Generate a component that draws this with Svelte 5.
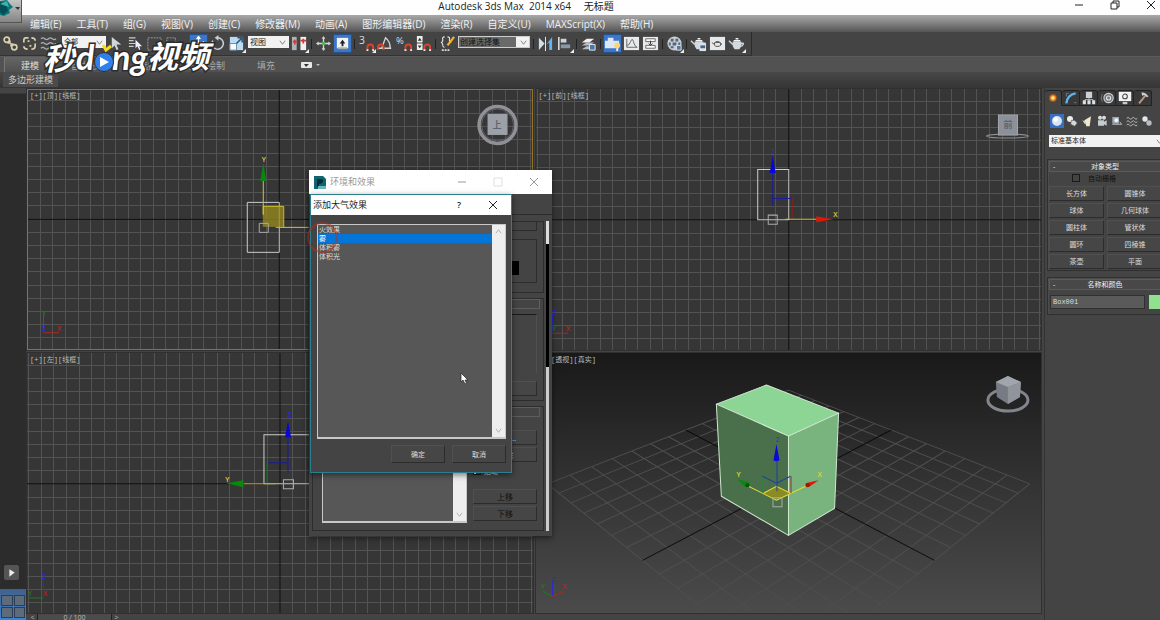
<script lang="ts">
	type Tool = { kind: 'tool'; name: string; label: string; on?: boolean; flyout?: boolean };
	type Item = Tool | { kind: 'sep' | 'gap' } | { kind: 'select'; cls: string; label: string; value: string };
	type Point = [number, number];

	let menus = [
		'编辑(E)', '工具(T)', '组(G)', '视图(V)', '创建(C)', '修改器(M)', '动画(A)',
		'图形编辑器(D)', '渲染(R)', '自定义(U)', 'MAXScript(X)', '帮助(H)'
	];

	let ribbonTabs = ['建模', '自由形式', '选择', '对象绘制', '填充'];
	let ribbonTab = $state('建模');

	const magnet = '<path d="M10 16v-3a3 3 0 0 1 6 0v3" fill="none" stroke="#d8452f" stroke-width="2"/><path d="M9 15h2v2H9zM15 15h2v2h-2z" fill="#eee"/>';
	const teapot = '<path d="M5 7h9q1 5-2 8H7Q4 12 5 7z" fill="#d3d9df"/><path d="M5 10L1 6M13 9q4-1 3 1t-3 2" fill="none" stroke="#d3d9df" stroke-width="1.5"/><path d="M6 6h7M8 4h3" stroke="#f3f3f3" stroke-width="1.5"/>';

	const icons: Record<string, string> = {
		link: '<g fill="none" stroke="#d9cfae" stroke-width="1.8"><circle cx="5" cy="5" r="2.8"/><circle cx="13" cy="13" r="2.8"/><path d="M7 7l4 4M6 9l3-3M9 12l3-3"/></g>',
		unlink: '<g fill="none" stroke="#d9cfae" stroke-width="1.8"><path d="M8 3H5Q3 3 3 6v2M11 3q4 0 4 3M3 12q0 3 4 3M11 15q4 0 4-4V9"/><path d="M7 6l2 1M9 12l2-1"/></g>',
		bind: '<path d="M1 4q2-2 4 0t4 0 4 0 4 0M1 9q2-2 4 0t4 0 4 0 4 0M1 14q2-2 4 0t4 0 4 0" fill="none" stroke="#a9adb2" stroke-width="1.3"/>',
		pick: '<path d="M4 2v12l3-3 2 5 2-1-2-5h5z" fill="#cfd6de"/>',
		pickName: '<path d="M2 3h7M2 6h5M2 9h7M2 12h5" stroke="#ccc" stroke-width="1.3"/><path d="M9 5v9l2-2 2 4 1-1-1-3h3z" fill="#eef"/>',
		rect: '<path d="M2 3h14v13H2z" fill="none" stroke="#9b9b9b" stroke-dasharray="2 1"/>',
		crossing: '<path d="M2 3h9v11H2z" fill="none" stroke="#999" stroke-dasharray="2 1"/><circle cx="12" cy="11" r="4" fill="#888"/>',
		move: '<path d="M9 2v14M2 9h14M9 1l-2 3h4zM9 17l-2-3h4zM1 9l3-2v4zM17 9l-3-2v4z" fill="#fff" stroke="#fff"/>',
		rotate: '<path d="M9 3a6 6 0 1 1-5 3" fill="none" stroke="#c9ced4" stroke-width="1.6"/><path d="M10 0v6L6 3z" fill="#c9ced4"/>',
		scale: '<path d="M2 2h14v14H2z" fill="#b8dcf2"/><path d="M2 9h7v7H2z" fill="#f7fbff" stroke="#6c8aa0"/><path d="M9 9l5-5M10 3h5v5" fill="none" stroke="#2d5272" stroke-width="1.6"/>',
		pivot: '<path d="M1 2h5v14H1z" fill="#aab4bd"/><path d="M10 2h6v14h-6z" fill="#f0f0f0"/><path d="M4 5v5M2 7h5M13 4v5M10 6h6" stroke="#d43b2c" stroke-width="1.8"/>',
		manipulate: '<path d="M9 2v14M2 9h14" stroke="#ddd" stroke-width="1.4"/><circle cx="9" cy="9" r="2" fill="#5ab25f"/><path d="M7 4l2-3 2 3zM7 14l2 3 2-3zM4 7L1 9l3 2zM14 7l3 2-3 2z" fill="#cfcfcf"/>',
		keyboard: '<path d="M3 3h12v11H3z" fill="#f3f3f3"/><path d="M4 13h10v2H4z" fill="#aaa"/><path d="M9 5l3 4h-2v3H8V9H6z" fill="#222"/>',
		snap: '<text x="1" y="10" font-size="11" fill="#ddd">3</text>' + magnet,
		angleSnap: '<path d="M1 14h14M5 14L9 3q5 4 5 11" fill="none" stroke="#d5d5d5" stroke-width="1.4"/><path d="M1 16v-3a3 3 0 0 1 6 0v3" fill="none" stroke="#d8452f" stroke-width="2"/>',
		percentSnap: '<text x="0" y="10" font-size="10" fill="#ddd">%</text>' + magnet,
		spinnerSnap: '<path d="M2 1h6v7H2zM2 9h6v7H2z" fill="#eee"/><path d="M3 6l2-3 2 3zM3 11l2 3 2-3z" fill="#333"/>' + magnet,
		namedSets: '<path d="M6 2Q3 2 4 5q0 3-2 3 2 0 2 3 0 2 2 2M9 2q3 0 2 3 0 3 2 3" fill="none" stroke="#ddd" stroke-width="1.2"/><path d="M16 2l-7 9" stroke="#f3b12f" stroke-width="2.4"/><path d="M3 16h9" stroke="#ddd" stroke-width="2" stroke-dasharray="2 1"/>',
		mirror: '<path d="M2 3l6 6-6 7z" fill="#d6dde3"/><path d="M9 2v15" stroke="#eee"/><path d="M16 2v14h-3V8l-3 2z" fill="#65b4ec"/>',
		align: '<path d="M3 2v14" stroke="#eee" stroke-width="1.5"/><path d="M5 4h6v4H5z" fill="#cdd3d8"/><path d="M5 10h10v4H5z" fill="#8898a8"/>',
		layers: '<path d="M2 8l5-4h8l-5 4z" fill="#f0f0f0"/><path d="M2 11l5-3h8l-5 3zM2 15l5-3h8l-5 3z" fill="#b8bec4"/><path d="M10 10h6v6h-6z" fill="#4878a5" stroke="#e5edf4"/>',
		ribbon: '<path d="M1 6h3V3h6v3h6v8H1z" fill="#dbe7f3"/><circle cx="14" cy="11" r="3" fill="#ffd66a"/><path d="M13 14h2v3h-2z" fill="#f5f0dc"/>',
		curve: '<path d="M1 2h16v14H1z" fill="#e8eaec"/><path d="M4 4v9h11M4 11q3 0 4-4 2-5 3 0 1 5 4 6" fill="none" stroke="#666"/>',
		schematic: '<path d="M1 2h16v14H1z" fill="#e8eaec"/><path d="M4 4h10v3H4zM4 11h10v3H4z" fill="#fff" stroke="#666"/><path d="M9 6v4M7 9l2 2 2-2" stroke="#333" fill="none"/>',
		material: '<circle cx="9" cy="9" r="7.5" fill="#c8ced3"/><path d="M5 4h3v3H5zM10 4h3v3h-3zM7 8h4v3H7zM3 8h2v3H3zM13 8h2v3h-2zM5 12h3v2H5z" fill="#536679"/><path d="M11 11h5v5h-5z" fill="#5479a0" stroke="#dfe7ee"/>',
		renderSetup: teapot + '<path d="M10 9h7v8h-7z" fill="#dce3e9"/><path d="M11 11h5v3h-5z" fill="#40678e"/>',
		frame: '<path d="M1 2h16v14H1z" fill="#e6e9eb"/><path d="M6 8h6q1 3-1 4H7Q5 11 6 8zM6 10L3 8M12 9q3 0 0 2M7 7h4" fill="none" stroke="#555"/>',
		render: teapot,
		sun: '<circle cx="9" cy="9" r="5" fill="#a4571d"/><circle cx="9" cy="9" r="3.6" fill="#f79a2c"/><circle cx="9" cy="9" r="1.8" fill="#fff0a8"/>',
		arc: '<path d="M3 16Q4 5 15 3" fill="none" stroke="#60b3e9" stroke-width="3"/><path d="M3 3h3M3 3v4M13 15h3" stroke="#888"/>',
		hierarchy: '<path d="M5 1h8v8H5z" fill="#c9d0d6"/><path d="M9 8v3M4 13v-2h10v2" fill="none" stroke="#ccc"/><path d="M1 12h4v5H1zM7 12h4v5H7zM13 12h4v5h-4z" fill="#d9dfe4"/>',
		motion: '<circle cx="11" cy="9" r="6" fill="#777" stroke="#ccd1d6" stroke-width="1.4"/><circle cx="11" cy="9" r="2.6" fill="none" stroke="#dfe3e6" stroke-width="1.5"/><path d="M3 4q-3 5 0 10" fill="none" stroke="#888"/>',
		display: '<path d="M1 1h16v12H1z" fill="#f0f2f4"/><path d="M6 14h6v3H6z" fill="#c8c8c8"/><circle cx="9" cy="7" r="3" fill="none" stroke="#444" stroke-width="1.3"/>',
		hammer: '<path d="M12 6L4 16" stroke="#bd9683" stroke-width="2.4"/><path d="M7 2q5-1 9 5l-2 1-3-3-3 1z" fill="#ccd0d4"/>',
		sphere: '<circle cx="9" cy="9" r="7.5" fill="#d7e4f2"/><circle cx="7" cy="7" r="3.5" fill="#fff"/>',
		shapes: '<circle cx="6" cy="6" r="4.500" fill="#eee"/><path d="M8 8h5l4 4-4 5-6-3z" fill="#d5d8db" stroke="#555"/>',
		light: '<path d="M15 2L5 8l3 9h5z" fill="#eee8c9"/><path d="M2 8l5 2-1 4z" fill="#ddd"/>',
		camera: '<circle cx="6" cy="4" r="3" fill="#ddd"/><circle cx="12" cy="4" r="3" fill="#ddd"/><path d="M3 8h9v8H3zM12 10l4-2v8l-4-2z" fill="#c5cbd0"/>',
		helper: '<path d="M2 3h10v10H2z" fill="#9eabb7"/><circle cx="8" cy="8" r="3" fill="#f1f3f5"/><path d="M2 14h14l-3-4" stroke="#eee" fill="none"/>',
		warp: '<path d="M1 5q2-3 4 0t4 0 4 0 4 0M1 10q2-3 4 0t4 0 4 0 4 0M1 15q2-3 4 0t4 0 4 0 4 0" fill="none" stroke="#c3c7ca" stroke-width="1.3"/>',
		system: '<circle cx="6" cy="6" r="4" fill="#e3e6e8"/><circle cx="12" cy="12" r="4" fill="#b7bdc2"/>'
	};

	const tool = (name: string, label: string, on = false, flyout = false): Tool => ({ kind: 'tool', name, label, on, flyout });
	const sep: Item = { kind: 'sep' };

	let toolbar: Item[] = [
		tool('link', '选择并链接'),
		tool('unlink', '断开链接'),
		tool('bind', '绑定到空间扭曲'),
		{ kind: 'select', cls: 'filter', label: '选择过滤器', value: '全部' },
		tool('pick', '选择对象'),
		tool('pickName', '按名称选择'),
		tool('rect', '矩形选择区域'),
		tool('crossing', '窗口/交叉'),
		{ kind: 'gap' },
		tool('move', '选择并移动', true),
		tool('rotate', '选择并旋转'),
		tool('scale', '选择并缩放', false, true),
		{ kind: 'select', cls: 'coords', label: '参考坐标系', value: '视图' },
		tool('pivot', '使用轴点中心', false, true),
		sep,
		tool('manipulate', '选择并操纵'),
		tool('keyboard', '键盘快捷键覆盖', true),
		sep,
		tool('snap', '捕捉开关', false, true),
		tool('angleSnap', '角度捕捉'),
		tool('percentSnap', '百分比捕捉'),
		tool('spinnerSnap', '微调器捕捉'),
		sep,
		tool('namedSets', '编辑命名选择集'),
		{ kind: 'select', cls: 'sets', label: '命名选择集', value: '创建选择集' },
		sep,
		tool('mirror', '镜像'),
		tool('align', '对齐', false, true),
		sep,
		tool('layers', '层管理器'),
		sep,
		tool('ribbon', '切换功能区', true),
		tool('curve', '曲线编辑器'),
		tool('schematic', '图解视图'),
		sep,
		tool('material', '材质编辑器', false, true),
		sep,
		tool('renderSetup', '渲染设置'),
		tool('frame', '渲染帧窗口'),
		tool('render', '渲染产品', false, true)
	];

	let panelTabs = [
		['sun', '创建'], ['arc', '修改'], ['hierarchy', '层次'],
		['motion', '运动'], ['display', '显示'], ['hammer', '实用程序']
	];
	let categories = [
		['sphere', '几何体'], ['shapes', '图形'], ['light', '灯光'], ['camera', '摄影机'],
		['helper', '辅助对象'], ['warp', '空间扭曲'], ['system', '系统']
	];
	let primitives = ['长方体', '圆锥体', '球体', '几何球体', '圆柱体', '管状体', '圆环', '四棱锥', '茶壶', '平面'];

	let effects = ['火效果', '雾', '体积雾', '体积光'];
	let effect = $state('雾');
	let autoGrid = $state(false);
	let active = $state(true);
	let objectName = $state('Box001');

	// Home grid of an orthographic view, stepped outwards from its origin.
	function homeGrid(x: number, y: number, w: number, h: number, cx: number, cy: number) {
		let d = '';
		for (let i = -60; i <= 60; i++) {
			const gx = Math.round(cx + i * 12.56);
			const gy = Math.round(cy + i * 13.2);
			if (i && gx > x && gx < x + w) d += `M${gx} ${y}v${h}`;
			if (i && gy > y && gy < y + h) d += `M${x} ${gy}h${w}`;
		}
		return d;
	}

	// Ground plane seen along its diagonal; u and v run from -1 to 1.
	function project(u: number, v: number): Point {
		const depth = 5.75 + u + v;
		return [788 + ((u - v) * 692) / depth, 121 + 2085 / depth];
	}
	function ground(u1: number, v1: number, u2: number, v2: number) {
		return `M${project(u1, v1).join(' ')}L${project(u2, v2).join(' ')}`;
	}
	let floor = '';
	for (let i = -7; i <= 7; i++) {
		if (i) floor += ground(i / 7, -1, i / 7, 1) + ground(-1, i / 7, 1, i / 7);
	}
	const axes = ground(0, -1, 0, 1) + ground(-1, 0, 1, 0);
</script>

{#snippet icon(name: string)}
	<svg class="icon" viewBox="0 0 18 18" aria-hidden="true">{@html icons[name]}</svg>
{/snippet}

{#snippet chevron(up = false)}
	<svg class="chevron" viewBox="0 0 8 8" aria-hidden="true">
		<path d={up ? 'M1 6l3-4 3 4' : 'M1 2l3 4 3-4'} fill="none" stroke="currentColor" />
	</svg>
{/snippet}

<div class="app">
	<header class="titlebar">
		<button class="logo" aria-label="应用程序">
			<svg viewBox="0 0 21 22">
				<path d="M0 1l7-1 3 4 3 3-4 3 1 3-6 3-4-1z" fill="#0c777a" />
				<path d="M0 2l6 2 2 7-5 4-3-3z" fill="#064d55" />
				<path d="M0 4l7-3 2 6z" fill="#39b3ac" />
				<path d="M15 7h5l-2 3z" fill="#333" />
			</svg>
		</button>
		<h1>Autodesk 3ds Max&nbsp; 2014 x64 <span>无标题</span></h1>
		<div class="window-buttons">
			<button aria-label="最小化"><svg viewBox="0 0 10 10"><path d="M1 5h8" /></svg></button>
			<button aria-label="还原"><svg viewBox="0 0 10 10"><path d="M1 3h6v6H1zM3 3V1h6v6H7" /></svg></button>
			<button aria-label="关闭"><svg viewBox="0 0 10 10"><path d="M1 1l8 8M9 1L1 9" /></svg></button>
		</div>
	</header>

	<nav class="menubar">
		{#each menus as menu}
			<button>{menu}</button>
		{/each}
	</nav>

	<div class="toolbar">
		<div class="tools">
			{#each toolbar as item}
				{#if item.kind === 'tool'}
					<button class="tool" class:on={item.on} class:flyout={item.flyout} aria-label={item.label}>
						{@render icon(item.name)}
					</button>
				{:else if item.kind === 'select'}
					<span class="drop {item.cls}">
						<select aria-label={item.label}><option>{item.value}</option></select>
						{@render chevron()}
					</span>
				{:else}
					<span class={item.kind}></span>
				{/if}
			{/each}
		</div>
	</div>

	<div class="ribbon">
		{#each ribbonTabs as tab}
			<button class:current={ribbonTab === tab} onclick={() => (ribbonTab = tab)}>{tab}</button>
		{/each}
		<button class="toggle" aria-label="最小化功能区">
			<svg viewBox="0 0 20 8">
				<rect x="0" y="1" width="11" height="6" rx="1" fill="#e8e8e8" />
				<path d="M3 3h5L5 6z" fill="#333" />
				<path d="M15 3h4l-2 2z" fill="#bbb" />
			</svg>
		</button>
	</div>
	<div class="subribbon"><button>多边形建模</button></div>

	<div class="main">
		<aside class="rail">
			<button class="play" aria-label="展开"><svg viewBox="0 0 14 14"><path d="M5 4l5 3-5 4z" fill="#eee" /></svg></button>
			<button class="layout" aria-label="视口布局"><i></i><i></i><i></i><i></i></button>
		</aside>

		<div class="centre">
			<div class="viewports">
				<section class="viewport selected">
					<span class="label">[+][顶][线框]</span>
					<svg viewBox="27 89 506 261" preserveAspectRatio="xMinYMin slice">
						<path class="grid" d={homeGrid(27, 89, 506, 261, 279.5, 219.5)} />
						<path class="origin" d="M279.500 89v261M27 219.500h506" />
						<path class="wire" d="M247.500 202.500h32v50h-32z" />
						<rect x="263" y="206" width="21" height="21" fill="#9b8e1c" fill-opacity=".75" />
						<path d="M263.500 214V206.500h20.500V227.500" fill="none" stroke="#c8b92c" />
						<path d="M263.500 180v35M276 227.500h60" stroke="#d5c531" />
						<path d="M263.500 163l3 18h-6z" fill="#078a0c" />
						<path class="pivot" d="M259.500 223.500h9v9h-9z" />
						<text x="262" y="162" fill="#e0cf35">Y</text>
						<path d="M43.500 332v-18" stroke="#1b7a21" /><path d="M43.500 333h16" stroke="#ad281e" />
						<text x="42" y="316" fill="#1b7a21">Y</text><text x="42" y="331" fill="#2c2ccc">Z</text><text x="57" y="331" fill="#ad281e">X</text>
						<circle cx="498" cy="125" r="18.500" fill="none" stroke="#8f9196" stroke-width="3.500" />
						<circle cx="498" cy="125" r="16" fill="none" stroke="#5f6165" />
						<rect x="488" y="114" width="20" height="21" fill="#9ca1a9" />
						<text class="face" x="493" y="128">上</text>
					</svg>
				</section>

				<section class="viewport">
					<span class="label">[+][前][线框]</span>
					<svg viewBox="536 89 505 261" preserveAspectRatio="xMinYMin slice">
						<path class="grid" d={homeGrid(536, 89, 505, 261, 788, 219.5)} />
						<path class="origin" d="M788.500 89v261M536 219.500h505" />
						<path class="wire" d="M757.500 169.500h31v50h-31z" />
						<path d="M772.500 172v34M772.500 198.500h19" stroke="#1b1b9b" />
						<path d="M792 198v20" stroke="#8c2119" />
						<path d="M785 219h32" stroke="#d5c531" />
						<path d="M772.500 156l3 17h-6z" fill="#0606d8" />
						<path d="M833 219l-17-3v6z" fill="#dc1908" />
						<path class="pivot" d="M768 215h9v9h-9z" />
						<text x="771" y="154" fill="#2c2ccc">Z</text><text x="833" y="217" fill="#e0cf35">X</text>
						<path d="M552 333h16" stroke="#ad281e" /><path d="M552.500 332v-18" stroke="#2c2ccc" />
						<text x="552" y="315" fill="#2c2ccc">Z</text><text x="552" y="331" fill="#1b7a21">Y</text><text x="566" y="331" fill="#ad281e">X</text>
						<ellipse cx="1007" cy="136" rx="21" ry="2" fill="none" stroke="#8f9196" />
						<rect x="998" y="115" width="19" height="20" fill="#8b9099" stroke="#a1a6ae" />
						<text class="face" x="1003" y="128">前</text>
					</svg>
				</section>

				<section class="viewport">
					<span class="label">[+][左][线框]</span>
					<svg viewBox="27 353 506 260" preserveAspectRatio="xMinYMin slice">
						<path class="grid" d={homeGrid(27, 353, 506, 260, 279.5, 483.5)} />
						<path class="origin" d="M279.500 353v260M27 483.500h506" />
						<path class="wire" d="M263.500 483.500v-49h50v49z" />
						<path d="M287.500 436v35M268 462.500h19" stroke="#1b1b9b" />
						<path d="M266.500 462v21" stroke="#176b1c" />
						<path d="M243 483.500h32" stroke="#c3a52b" />
						<path d="M287.500 421l3 16h-6z" fill="#0606d8" />
						<path d="M226 483l17-3v7z" fill="#078a0c" />
						<path class="pivot" d="M283 479.500h10v9h-10z" />
						<text x="287" y="417" fill="#2c2ccc">Z</text><text x="225" y="482" fill="#e0cf35">Y</text>
						<path d="M43.500 597v-19" stroke="#2c2ccc" /><path d="M29 597.500h14" stroke="#1b7a21" />
						<text x="42" y="579" fill="#2c2ccc">Z</text><text x="28" y="596" fill="#1b7a21">Y</text><text x="43" y="596" fill="#ad281e">X</text>
					</svg>
				</section>

				<section class="viewport perspective">
					<span class="label">[+][透视][真实]</span>
					<svg viewBox="536 353 505 260" preserveAspectRatio="xMinYMin slice">
						<path d={floor} fill="none" stroke="#4e4e4e" />
						<path d={axes} fill="none" stroke="#0d0d0d" />
						<g stroke="#cfe8cf" stroke-linejoin="round">
							<path d="M766 385l-50 19 72 32 50-23z" fill="#8dd594" />
							<path d="M716 404l5 92 67 39v-99z" fill="#4a704b" />
							<path d="M788 436l50-23-4 95-46 27z" fill="#79b37e" />
						</g>
						<path d="M776.500 486l14 7-14 7-14-7z" fill="#8b8b26" />
						<path d="M748 486l28 14M805 486l-29 14M763 493l13-7 14 7" fill="none" stroke="#e0d93a" />
						<path d="M762.500 476v17" stroke="#268b36" /><path d="M790.500 476v17" stroke="#97322a" />
						<path d="M776.500 461v30M762 476l14 7 14-7" fill="none" stroke="#20419b" />
						<path d="M776 444l3 16q-3 2-6 0z" fill="#0808db" />
						<path d="M737 479l12 3-4 5z" fill="#068a0c" /><circle cx="747" cy="485" r="2" fill="#074f0a" />
						<path d="M818 480l-13 3 3 4z" fill="#df1605" /><circle cx="807" cy="485" r="2" fill="#9a150a" />
						<path class="pivot" d="M772.500 497.500h9v9h-9z" />
						<text x="775" y="442" fill="#2347c2">Z</text><text x="736" y="477" fill="#d8d83b">Y</text><text x="817" y="477" fill="#d8d83b">X</text>
						<path d="M552.500 596v-15" stroke="#2c2ccc" /><path d="M552 596l-9-5" stroke="#1b7a21" /><path d="M552 596l11-5" stroke="#ad281e" />
						<text x="551" y="582" fill="#2c2ccc">Z</text><text x="541" y="589" fill="#1b7a21">Y</text><text x="562" y="589" fill="#ad281e">X</text>
						<ellipse cx="1007" cy="400" rx="20" ry="11" fill="none" stroke="#82858c" stroke-width="3" />
						<path d="M1007 376l13 6-1 15-12 7-11-7-1-15z" fill="#777b83" />
						<path d="M1007 376l13 6-13 5-12-5z" fill="#a1a5ac" />
						<path d="M1007 387l13-5-1 15-12 7z" fill="#90949c" />
					</svg>
				</section>
			</div>

			<div class="timeline">
				<button aria-label="上一帧">&lt;</button>
				<span class="frame">0 / 100</span>
				<button aria-label="下一帧">&gt;</button>
			</div>
		</div>

		<aside class="panel">
			<div class="panel-tabs">
				{#each panelTabs as [name, label], i}
					<button class:current={i === 0} aria-label={label}>{@render icon(name)}</button>
				{/each}
			</div>
			<div class="categories">
				{#each categories as [name, label], i}
					<button class:current={i === 0} aria-label={label}>{@render icon(name)}</button>
				{/each}
			</div>
			<span class="drop subtype">
				<select aria-label="类别"><option>标准基本体</option></select>
				{@render chevron()}
			</span>

			<section class="rollout first">
				<h2><span>-</span>对象类型</h2>
				<label class="check"><input type="checkbox" bind:checked={autoGrid} />自动栅格</label>
				<div class="primitives">
					{#each primitives as name}
						<button class="btn">{name}</button>
					{/each}
				</div>
			</section>
			<section class="rollout">
				<h2><span>-</span>名称和颜色</h2>
				<div class="name">
					<input aria-label="名称" bind:value={objectName} />
					<button aria-label="颜色"></button>
				</div>
			</section>
		</aside>
	</div>

	<div class="window environment">
		<header>
			<svg class="badge" viewBox="0 0 12 13"><path d="M0 0h9l3 3v10H0z" fill="#10656f" /><path d="M3 3h3q4 0 3 3-1 2-4 2v3H3z" fill="#042f38" /><path d="M4 10h8v3H4z" fill="#66b8be" /></svg>
			<h2>环境和效果</h2>
			<button aria-label="最小化"><svg viewBox="0 0 10 10"><path d="M1 5h8" /></svg></button>
			<button class="faint" aria-label="最大化"><svg viewBox="0 0 10 10"><path d="M1 1h8v8H1z" /></svg></button>
			<button aria-label="关闭"><svg viewBox="0 0 10 10"><path d="M1 1l8 8M9 1L1 9" /></svg></button>
		</header>
		<div class="env-body">
			<div class="env-pages">
				<section class="common">
					<div class="strip"></div>
					<div class="swatches"><i></i></div>
				</section>
				<section class="exposure">
					<div class="bar"></div>
					<div class="well"></div>
					<button class="btn" aria-label="渲染预览"></button>
				</section>
				<section class="atmosphere">
					<div class="bar"></div>
					<div class="columns">
						<div class="listbox">
							<div class="scroll">{@render chevron()}</div>
						</div>
						<div class="actions">
							<button class="btn">添加...</button>
							<button class="btn">删除</button>
							<label class="check"><input type="checkbox" bind:checked={active} />活动</label>
							<button class="btn dim">上移</button>
							<button class="btn dim">下移</button>
						</div>
					</div>
				</section>
			</div>
			<div class="env-scroll"><i></i></div>
		</div>
	</div>

	<div class="window dialog" role="dialog" aria-label="添加大气效果">
		<header>
			<h2>添加大气效果</h2>
			<button class="help" aria-label="帮助">?</button>
			<button aria-label="关闭"><svg viewBox="0 0 10 10"><path d="M1 1l8 8M9 1L1 9" /></svg></button>
		</header>
		<div class="dialog-body">
			<div class="listbox">
				<div class="options" role="listbox" aria-label="大气效果">
					{#each effects as name}
						<button role="option" aria-selected={effect === name} onclick={() => (effect = name)}>{name}</button>
					{/each}
				</div>
				<div class="scroll">{@render chevron(true)}{@render chevron()}</div>
			</div>
			<footer>
				<button class="btn">确定</button>
				<button class="btn">取消</button>
			</footer>
		</div>
	</div>

	<div class="ring"></div>
	<svg class="cursor" viewBox="0 0 9 13"><path d="M1 1v9l2-2 2 4 1.500-1-1.500-3h3z" fill="#fff" stroke="#222" stroke-width=".7" /></svg>

	<svg class="watermark" viewBox="0 0 180 44">
		<g class="mark">
			<text x="4" y="30" font-size="31">秒</text>
			<text x="37" y="30" font-size="34">d</text>
			<text x="73" y="30" font-size="34">ng</text>
			<text x="108" y="28" font-size="31">视频</text>
		</g>
		<circle cx="65" cy="22" r="9.500" fill="#2f80ed" stroke="#303030" />
		<path d="M61 17l9 5-9 5z" fill="#fff" />
		<path d="M64 5l3 5 5-4" fill="none" stroke="#fadb1e" stroke-width="3" />
	</svg>
</div>

<style>
	:global(body) {
		margin: 0;
		background: #444;
	}
	.app {
		position: relative;
		display: flex;
		flex-direction: column;
		height: 100vh;
		overflow: hidden;
		background: #444;
		color: #ddd;
		font: 7px/9px 'Open Sans', 'Noto Sans CJK SC', sans-serif;
	}
	button,
	input,
	select {
		margin: 0;
		padding: 0;
		border: 0;
		background: none;
		color: inherit;
		font: inherit;
	}
	h1,
	h2 {
		margin: 0;
		font: inherit;
	}
	svg {
		display: block;
	}

	/* title and menu */
	.titlebar {
		display: flex;
		justify-content: flex-end;
		flex: none;
		height: 15px;
		background: #fefefe;
		color: #222;
	}
	.titlebar h1 {
		position: absolute;
		left: 0;
		right: 0;
		padding-right: 108px;
		font-size: 10px;
		line-height: 12px;
		text-align: center;
	}
	.titlebar h1 span {
		margin-left: 10px;
	}
	.logo {
		position: absolute;
		z-index: 1;
		top: 0;
		left: 0;
		width: 22px;
		height: 23px;
		border: solid #555;
		border-width: 0 1px 1px 0;
		background: linear-gradient(#c4c4c4, #858585);
	}
	.window-buttons {
		position: relative;
		display: flex;
		gap: 26px;
		height: 10px;
		padding: 0 4px;
	}
	.window-buttons svg,
	.window header button svg {
		width: 10px;
		height: 10px;
		fill: none;
		stroke: currentColor;
	}
	.menubar {
		display: flex;
		flex: none;
		gap: 15px;
		height: 17px;
		padding-left: 30px;
		background: linear-gradient(#a9a9a9, #555);
		color: #f0f0f0;
		font-size: 10px;
		line-height: 18px;
	}
	.menubar button {
		white-space: nowrap;
	}

	/* toolbar */
	.toolbar {
		display: flex;
		flex: none;
		height: 24px;
		background: #444;
		border-bottom: 1px solid #5b5b5b;
	}
	.tools {
		display: flex;
		align-items: center;
		padding: 0 5px 0 1px;
		border-right: 1px solid #2b2b2b;
		border-bottom: 1px solid #333;
	}
	.tool {
		position: relative;
		width: 19px;
		height: 19px;
	}
	.icon {
		width: 17px;
		height: 17px;
		margin: auto;
	}
	.tool.on {
		background: #3b76c8;
		box-shadow: inset 0 0 0 1px #24508e;
	}
	.flyout::after {
		content: '';
		position: absolute;
		right: 0;
		bottom: 0;
		border: 2px solid;
		border-color: transparent #eee #eee transparent;
	}
	.sep {
		width: 1px;
		height: 10px;
		margin: 0 2px;
		background: #222;
	}
	.gap {
		width: 6px;
	}
	.drop {
		position: relative;
		align-self: flex-start;
		height: 12px;
		margin-top: 4px;
		background: #f2f2f2;
		color: #222;
	}
	.drop select {
		display: block;
		width: 100%;
		height: 12px;
		padding-left: 2px;
		appearance: none;
		line-height: 12px;
	}
	.chevron {
		width: 7px;
		height: 7px;
		color: #777;
	}
	.drop .chevron {
		position: absolute;
		top: 3px;
		right: 3px;
		pointer-events: none;
	}
	.filter {
		width: 44px;
		margin-left: 4px;
		margin-right: 1px;
	}
	.coords {
		width: 41px;
		margin-left: 2px;
		margin-right: 1px;
	}
	.sets {
		width: 72px;
		margin-left: 1px;
		margin-right: 1px;
		background: linear-gradient(to right, #6a6a6a 58px, #f2f2f2 58px);
		box-shadow: inset 0 0 0 1px #ccc;
		color: #111;
	}
	.drop.coords,
	.drop.sets {
		font-size: 8px;
	}

	/* ribbon */
	.ribbon {
		display: flex;
		flex: none;
		height: 15px;
		padding-left: 5px;
		background: #525252;
		color: #aaa;
		font-size: 9px;
		line-height: 17px;
	}
	.ribbon button {
		padding: 0 16px;
	}
	.ribbon .current {
		border-left: 1px solid #777;
		margin-left: -1px;
		background: linear-gradient(#666, #505050);
		color: #ddd;
	}
	.ribbon .toggle {
		padding: 0 10px;
	}
	.toggle svg {
		width: 20px;
		height: 8px;
	}
	.subribbon {
		flex: none;
		height: 16px;
		padding-left: 3px;
		background: linear-gradient(#484848, #353535);
		color: #ccc;
		font-size: 9px;
		line-height: 15px;
	}
	.subribbon button {
		padding: 0 5px;
		background: #4b4b4b;
	}

	/* work area */
	.main {
		display: flex;
		flex: 1;
		min-height: 0;
	}
	.rail {
		display: flex;
		flex-direction: column;
		align-items: center;
		justify-content: flex-end;
		gap: 9px;
		width: 26px;
		background: linear-gradient(#444 5px, #2c2c2c 6px);
	}
	.play {
		width: 15px;
		height: 15px;
		margin-right: 4px;
		border-radius: 2px;
		background: #555;
	}
	.layout {
		display: grid;
		grid-template-columns: 1fr 1fr;
		grid-template-rows: 1fr 1fr;
		gap: 1px;
		width: 26px;
		height: 31px;
		padding: 6px 1px 2px;
		box-sizing: border-box;
		background: linear-gradient(#41618b, #3d83d6);
	}
	.layout i {
		border: 1px solid #2c3d55;
		background: #5e6b7b;
	}
	.centre {
		display: flex;
		flex: 1;
		flex-direction: column;
		min-width: 0;
		padding: 1px 4px 0 1px;
	}
	.viewports {
		display: grid;
		flex: 1;
		grid-template-columns: 1fr 1fr;
		grid-template-rows: 1fr 1fr;
		gap: 3px;
		min-height: 0;
	}
	.viewport {
		position: relative;
		min-height: 0;
		overflow: hidden;
		background: #363636;
		outline: 1px solid #303030;
	}
	.viewport > svg {
		width: 100%;
		height: 100%;
	}
	.viewport.selected::after {
		content: '';
		position: absolute;
		inset: 0;
		border: 1px solid #927427;
	}
	.perspective {
		background: linear-gradient(#191919, #333 50%, #4b4b4b);
	}
	.label {
		position: absolute;
		top: 3px;
		left: 3px;
		color: #bbb;
		font-family: 'Liberation Mono', 'Noto Sans CJK SC', monospace;
		white-space: nowrap;
	}
	.viewport text {
		font-size: 7px;
		font-weight: 600;
	}
	.viewport .face {
		fill: #5f656f;
		font-size: 9px;
	}
	.grid {
		fill: none;
		stroke: #535353;
		stroke-width: 1px;
		shape-rendering: crispEdges;
	}
	.origin {
		fill: none;
		stroke: #111;
	}
	.wire {
		fill: none;
		stroke: #ccc;
	}
	.pivot {
		fill: none;
		stroke: #aaa;
	}
	.timeline {
		display: flex;
		flex: none;
		height: 7px;
		margin-left: 1px;
		overflow: hidden;
		color: #bbb;
		line-height: 9px;
	}
	.timeline button {
		width: 9px;
	}
	.frame {
		width: 73px;
		border: solid #222;
		border-width: 0 1px;
		background: #4b4b4b;
		text-align: center;
	}

	/* command panel */
	.panel {
		width: 115px;
		overflow: hidden;
		border-left: 1px solid #333;
		margin-left: -1px;
	}
	.panel-tabs {
		display: flex;
		height: 16px;
		padding-top: 2px;
	}
	.panel-tabs button {
		flex: none;
		width: 18px;
		border: solid #222;
		border-width: 1px 1px 1px 0;
		border-radius: 3px 3px 0 0;
		background: #393939;
	}
	.panel-tabs .current {
		width: 17px;
		border-bottom-color: #444;
		background: #444;
	}
	.panel-tabs .icon {
		width: 14px;
		height: 14px;
	}
	.categories {
		display: flex;
		gap: 1px;
		margin: 8px 0 7px 5px;
	}
	.categories button {
		width: 14px;
		height: 14px;
	}
	.categories .current {
		background: #3a6fc0;
	}
	.categories .icon {
		width: 12px;
		height: 12px;
	}
	.subtype {
		display: block;
		margin: 0 -6px 0 4px;
	}
	.rollout {
		margin: 6px -6px 0 2px;
		padding: 1px 2px 5px 1px;
		border: 1px solid #303030;
		box-shadow: inset 1px 1px #4d4d4d;
	}
	.rollout.first {
		margin-top: 12px;
		padding-bottom: 1px;
	}
	.rollout h2 {
		position: relative;
		height: 9px;
		border: 1px solid #5a5a5a;
		background: #484848;
		color: #f0f0f0;
		text-align: center;
		padding-right: 2px;
	}
	.rollout h2 span {
		position: absolute;
		left: 3px;
	}
	.check {
		display: flex;
		align-items: center;
		justify-content: center;
		gap: 8px;
		height: 12px;
		padding-right: 24px;
		color: #111;
	}
	.check input {
		width: 8px;
		height: 8px;
		box-sizing: border-box;
		appearance: none;
		border: 1px solid #1a1a1a;
	}
	.check input:checked {
		background: linear-gradient(135deg, transparent 40%, #eee 40%, #eee 65%, transparent 65%);
	}
	.primitives {
		display: grid;
		grid-template-columns: 55px 1fr;
		gap: 2px 3px;
		padding-top: 2px;
	}
	.btn {
		height: 15px;
		border: 1px solid;
		border-color: #505050 #2c2c2c #2c2c2c #505050;
		background: #464646;
		text-align: center;
	}
	.name {
		display: flex;
		gap: 4px;
		margin: 5px 0 0 1px;
	}
	.name input {
		width: 95px;
		height: 14px;
		padding: 0 2px;
		box-sizing: border-box;
		border: 1px solid #303030;
		background: #5a5a5a;
		font-family: 'Liberation Mono', monospace;
	}
	.name button {
		flex: 1;
		background: #8fe08f;
	}

	/* floating windows */
	.window {
		position: absolute;
		box-sizing: border-box;
		display: flex;
		flex-direction: column;
		background: #444;
		box-shadow: 0 2px 6px rgba(0, 0, 0, 0.5);
	}
	.window header {
		display: flex;
		flex: none;
		align-items: center;
		background: #fff;
		color: #222;
		font-size: 9px;
		line-height: 12px;
	}
	.window header h2 {
		flex: 1;
	}
	.environment {
		top: 170px;
		left: 309px;
		width: 243px;
		height: 366px;
	}
	.environment header {
		gap: 26px;
		height: 24px;
		padding: 0 13px 0 5px;
		color: #999;
	}
	.environment header h2 {
		margin-left: -22px;
	}
	.faint {
		opacity: 0.3;
	}
	.badge {
		width: 12px;
		height: 13px;
	}
	.env-body {
		display: flex;
		flex: 1;
		gap: 2px;
		margin-top: 20px;
		padding: 6px 3px 5px;
		border-top: 1px solid #2d2d2d;
	}
	.env-pages {
		display: flex;
		flex: 1;
		flex-direction: column;
		gap: 5px;
	}
	.env-pages section {
		padding: 0 6px 0 9px;
		border: 1px solid #2d2d2d;
	}
	.common {
		height: 70px;
	}
	.strip {
		height: 8px;
		border: 1px solid #2d2d2d;
		border-top: 0;
	}
	.swatches {
		display: flex;
		align-items: center;
		justify-content: flex-end;
		height: 42px;
		margin-top: 8px;
		padding-right: 17px;
		border: 1px solid #2d2d2d;
	}
	.swatches i {
		width: 50px;
		height: 14px;
		margin-top: 14px;
		background: #000;
	}
	.exposure {
		height: 101px;
	}
	.bar {
		height: 8px;
		margin-right: -3px;
		border: 1px solid #5e5e5e;
	}
	.well {
		height: 58px;
		margin-top: 5px;
		border-top: 1px solid #191919;
		border-right: 1px solid #505050;
	}
	.exposure .btn {
		width: 100%;
		margin-top: 8px;
	}
	.env-pages .atmosphere {
		flex: 1;
	}
	.columns {
		display: flex;
		gap: 6px;
		margin-top: 13px;
	}
	.listbox {
		display: flex;
		border: 1px solid #c8c8c8;
		border-bottom-width: 2px;
		background: #575757;
	}
	.columns .listbox {
		flex: 1;
		justify-content: flex-end;
		height: 90px;
	}
	.scroll {
		display: flex;
		flex-direction: column;
		align-items: center;
		justify-content: flex-end;
		width: 13px;
		padding: 3px 0;
		box-sizing: border-box;
		background: #eee;
	}
	.scroll .chevron {
		color: #aaa;
	}
	.actions {
		display: flex;
		flex-direction: column;
		gap: 2px;
		width: 64px;
	}
	.actions .btn {
		font-size: 8px;
	}
	.actions .check {
		justify-content: flex-start;
		gap: 3px;
		margin: 1px 0 10px;
		padding: 0;
		color: #ddd;
	}
	.actions .dim {
		color: #111;
	}
	.env-scroll {
		width: 3px;
		background: linear-gradient(#ddd 23px, #000 23px, #000 146px, #ccc 146px);
	}
	.dialog {
		top: 194px;
		left: 310px;
		width: 202px;
		height: 279px;
		border: 1px solid #2c7f8c;
	}
	.dialog header {
		gap: 27px;
		height: 20px;
		padding: 0 13px 0 2px;
	}
	.help {
		font-weight: 600;
	}
	.dialog-body {
		display: flex;
		flex: 1;
		flex-direction: column;
		padding: 9px 5px 9px 6px;
	}
	.dialog .listbox {
		flex: 1;
	}
	.options {
		flex: 1;
	}
	.options button {
		display: block;
		width: 100%;
		height: 9px;
		padding-left: 1px;
		line-height: 9px;
		text-align: left;
	}
	.options button[aria-selected='true'] {
		background: #0675d8;
		color: #fff;
	}
	.dialog .scroll {
		justify-content: space-between;
	}
	.dialog footer {
		display: flex;
		justify-content: flex-end;
		gap: 7px;
		margin-top: 6px;
	}
	.dialog footer .btn {
		width: 54px;
		height: 18px;
	}

	/* overlays */
	.ring {
		position: absolute;
		top: 222px;
		left: 307px;
		width: 27px;
		height: 27px;
		border: 2px solid rgba(190, 45, 25, 0.5);
		border-radius: 50%;
		pointer-events: none;
	}
	.cursor {
		position: absolute;
		top: 372px;
		left: 460px;
		width: 9px;
		height: 13px;
	}
	.watermark {
		position: absolute;
		top: 40px;
		left: 39px;
		width: 180px;
		height: 44px;
		overflow: visible;
		pointer-events: none;
	}
	.mark {
		fill: #fff;
		stroke: #2b2b2b;
		stroke-width: 3px;
		paint-order: stroke;
		font-family: Lato, 'Noto Sans CJK SC', sans-serif;
		font-style: italic;
		font-weight: 700;
	}
</style>
